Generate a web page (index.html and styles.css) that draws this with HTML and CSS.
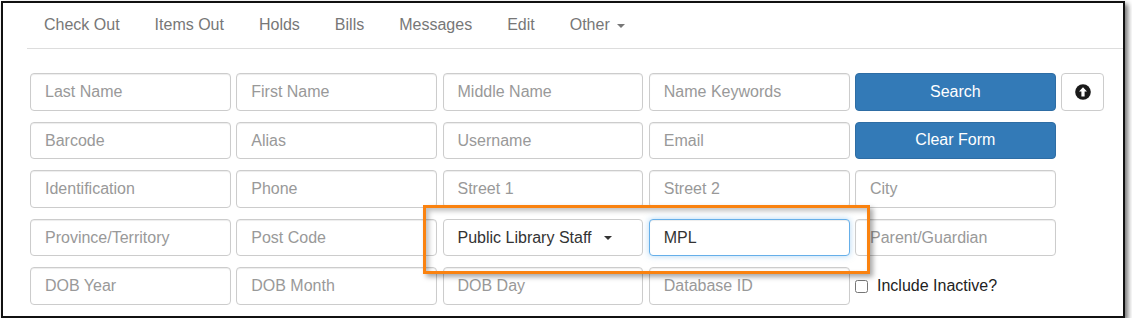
FILE: index.html
```html
<!DOCTYPE html>
<html lang="en">
  <head>
    <meta charset="UTF-8" />
    <title>Patron Search</title>
    <link rel="stylesheet" href="styles.css">
  </head>
  <body>
    <div class="frame">
      <ul class="nav-tabs">
        <li><a href="#">Check Out</a></li>
        <li><a href="#">Items Out</a></li>
        <li><a href="#">Holds</a></li>
        <li><a href="#">Bills</a></li>
        <li><a href="#">Messages</a></li>
        <li><a href="#">Edit</a></li>
        <li><a href="#">Other <span class="caret"></span></a></li>
      </ul>

      <form class="search-grid">
        <input class="field" placeholder="Last Name">
        <input class="field" placeholder="First Name">
        <input class="field" placeholder="Middle Name">
        <input class="field" placeholder="Name Keywords">
        <button type="button" class="btn-primary">Search</button>
        <button type="button" class="btn-icon" title="Hide">
          <svg width="16" height="16" viewBox="0 0 16 16">
            <circle cx="8" cy="8" r="7.8" fill="#1a1a1a" />
            <path d="M8 3.2 L12 7.6 H9.6 V12.4 H6.4 V7.6 H4 Z" fill="#fff" />
          </svg>
        </button>

        <input class="field" placeholder="Barcode">
        <input class="field" placeholder="Alias">
        <input class="field" placeholder="Username">
        <input class="field" placeholder="Email">
        <button type="button" class="btn-primary">Clear Form</button>
        <span></span>

        <input class="field" placeholder="Identification">
        <input class="field" placeholder="Phone">
        <input class="field" placeholder="Street 1">
        <input class="field" placeholder="Street 2">
        <input class="field" placeholder="City">
        <span></span>

        <input class="field" placeholder="Province/Territory">
        <input class="field" placeholder="Post Code">
        <div class="field select-btn">Public Library Staff <span class="caret dark"></span></div>
        <input class="field focused" value="MPL">
        <input class="field" placeholder="Parent/Guardian">
        <span></span>

        <input class="field" placeholder="DOB Year">
        <input class="field" placeholder="DOB Month">
        <input class="field" placeholder="DOB Day">
        <input class="field" placeholder="Database ID">
        <label class="check"><input type="checkbox"> Include Inactive?</label>
        <span></span>
      </form>

      <!-- callout around the profile / library fields -->
      <div class="callout"></div>
    </div>
  </body>
</html>
```

FILE: styles.css
```css
* {
  margin: 0;
  padding: 0;
  box-sizing: border-box;
}

body {
  font-family: "Liberation Sans", Arial, sans-serif;
  font-size: 16px;
  color: #333;
  background: #fff;
}

.frame {
  position: relative;
  margin: 1px 0 0 1px;
  width: 1124px;
  height: 317px;
  border: 2px solid #111;
  box-shadow: 3px 3px 5px rgba(0, 0, 0, 0.55);
}

/* tabs */
.nav-tabs {
  list-style: none;
  display: flex;
  margin-left: 24px;
  border-bottom: 1px solid #ddd;
}

.nav-tabs a {
  display: block;
  padding: 12px 17.5px 13px;
  line-height: 20px;
  color: #777;
  text-decoration: none;
}

.nav-tabs li:first-child a {
  padding-left: 17px;
}

.caret {
  display: inline-block;
  width: 0;
  height: 0;
  margin-left: 3px;
  vertical-align: middle;
  border-top: 4px solid #777;
  border-left: 4px solid transparent;
  border-right: 4px solid transparent;
}

.caret.dark {
  border-top-color: #333;
  margin-left: 12px;
}

/* search form */
.search-grid {
  display: grid;
  grid-template-columns: repeat(5, 200.75px) 43px;
  grid-auto-rows: 37.5px;
  column-gap: 5.5px;
  row-gap: 11px;
  margin: 24px 0 0 27px;
}

.field {
  width: 100%;
  height: 100%;
  padding: 1px 14px 0;
  border: 1px solid #ccc;
  border-radius: 4px;
  font-family: inherit;
  font-size: 16px;
  color: #333;
  background: #fff;
  box-shadow: inset 0 1px 1px rgba(0, 0, 0, 0.075);
}

.field::placeholder {
  color: #999;
}

.field.focused {
  border-color: #66afe9;
  outline: none;
  box-shadow: inset 0 1px 1px rgba(0, 0, 0, 0.075), 0 0 6px rgba(102, 175, 233, 0.5);
}

.select-btn {
  display: flex;
  align-items: center;
  padding-left: 14px;
  box-shadow: none;
}

.btn-primary {
  border: 1px solid #2e6da4;
  border-radius: 4px;
  background: #337ab7;
  color: #fff;
  font-family: inherit;
  font-size: 16px;
}

.btn-icon {
  display: flex;
  align-items: center;
  justify-content: center;
  border: 1px solid #ccc;
  border-radius: 4px;
  background: #fff;
}

.check {
  display: flex;
  align-items: center;
  gap: 9px;
  color: #222;
}

.check input {
  width: 13px;
  height: 13px;
  margin: 1px 0 0;
}

/* orange highlight drawn over the form */
.callout {
  position: absolute;
  left: 420px;
  top: 202px;
  width: 447px;
  height: 69px;
  border: 3.5px solid #fa820f;
  box-shadow: 3px 3px 5px rgba(0, 0, 0, 0.35), inset 3px 3px 5px rgba(0, 0, 0, 0.25);
}
```
